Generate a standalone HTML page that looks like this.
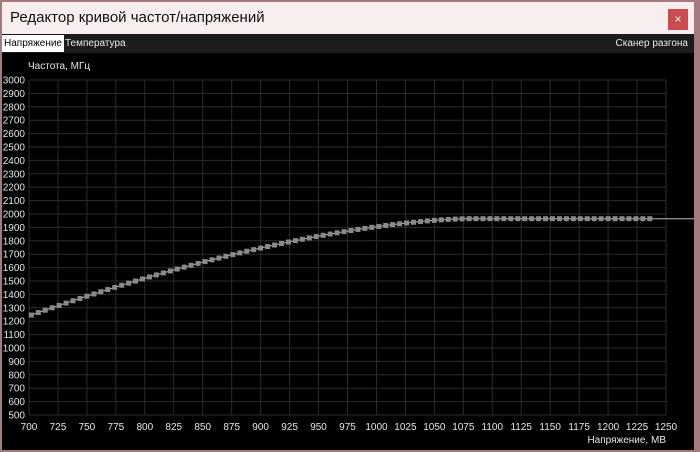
<!DOCTYPE html><html><head><meta charset="utf-8"><style>
body{margin:0;width:700px;height:452px;background:#a47a7c;font-family:"Liberation Sans",sans-serif;overflow:hidden;position:relative}
#win{position:absolute;left:2px;top:2px;width:692px;height:448px;background:#000}
#title{position:absolute;left:0;top:0;width:692px;height:32px;background:#f8eeee;font-size:15px;color:#111;line-height:32px}
#title span{position:absolute;left:8px}
#close{position:absolute;right:6px;top:7px;width:20px;height:21px;background:#cc4b4f;color:#fff;font-size:12px;text-align:center;line-height:21px}
#tabs{position:absolute;left:0;top:32px;width:692px;height:19px;background:#1c1c1c;font-size:10px;color:#e8e8e8;line-height:19px}
.t{position:absolute;top:1px;height:17px;line-height:17px;padding:0 3px}
svg{position:absolute;left:0;top:0}
</style></head><body><div id="win">
<div id="title"><span>Редактор кривой частот/напряжений</span><div id="close">×</div></div>
<div id="tabs"><div class="t" style="left:0;background:#fff;color:#000;padding:0 2px">Напряжение</div><div class="t" style="left:60px">Температура</div><div class="t" style="right:3px">Сканер разгона</div></div>
</div>
<svg id="s" width="700" height="452" font-family="Liberation Sans, sans-serif" font-size="10" fill="#e6e6e6"></svg>
<script>
var s=document.getElementById('s'),h='';
function X(v){return 29+(v-700)*637/550}function Y(f){return 415-(f-500)*335/2500}
for(var v=700;v<=1250;v+=25){var x=X(v);h+='<line x1="'+x+'" y1="80" x2="'+x+'" y2="415" stroke="#2c2c2c"/>';h+='<text x="'+x+'" y="430" text-anchor="middle">'+v+'</text>';}
for(var f=500;f<=3000;f+=100){var y=Y(f);h+='<line x1="29" y1="'+y+'" x2="666" y2="'+y+'" stroke="#2c2c2c"/>';h+='<text x="25" y="'+(y+3.5)+'" text-anchor="end">'+f+'</text>';}
h+='<text x="28" y="69">Частота, МГц</text><text x="666" y="443" text-anchor="end">Напряжение, МВ</text>';
function F(v){return v>=1080?1965:1965-725*Math.pow((1080-v)/380,1.6)}
var pts=[];for(var v=700;v<=1245;v+=6){pts.push(X(v)+','+Y(F(v)))}
pts.push('694,'+Y(1965));
h+='<polyline points="'+pts.join(' ')+'" fill="none" stroke="#bbb" stroke-width="1"/>';
for(var v=702;v<=1238;v+=6){h+='<rect x="'+(X(v)-2.5)+'" y="'+(Y(F(v))-2.5)+'" width="5" height="5" fill="#8a8a8a"/>'}
s.innerHTML=h;
</script></body></html>
